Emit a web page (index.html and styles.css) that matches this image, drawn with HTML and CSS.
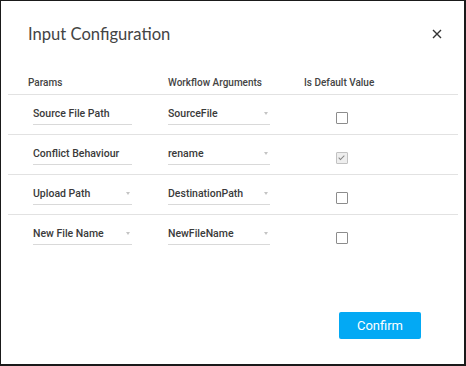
FILE: index.html
```html
<!DOCTYPE html>
<html lang="en">
  <head>
    <meta charset="UTF-8" />
    <meta name="viewport" content="width=device-width, initial-scale=1.0" />
    <title>Input Configuration</title>
    <link rel="stylesheet" href="styles.css">
  </head>
  <body>
    <main class="dialog">
      <header class="dialog-header">
        <h1>Input Configuration</h1>
        <button class="close" aria-label="Close">
          <svg width="10" height="10" viewBox="0 0 10 10">
            <path d="M1 1 L9 9 M9 1 L1 9" stroke="#333" stroke-width="1.4" />
          </svg>
        </button>
      </header>

      <section class="table">
        <div class="row head">
          <span>Params</span>
          <span>Workflow Arguments</span>
          <span>Is Default Value</span>
        </div>
        <div class="row">
          <div class="field param">Source File Path</div>
          <div class="field select">SourceFile</div>
          <div class="cell"><span class="check"></span></div>
        </div>
        <div class="row">
          <div class="field param">Conflict Behaviour</div>
          <div class="field select">rename</div>
          <div class="cell"><span class="check checked"></span></div>
        </div>
        <div class="row">
          <div class="field param select">Upload Path</div>
          <div class="field select">DestinationPath</div>
          <div class="cell"><span class="check"></span></div>
        </div>
        <div class="row">
          <div class="field param select">New File Name</div>
          <div class="field select">NewFileName</div>
          <div class="cell"><span class="check"></span></div>
        </div>
      </section>

      <footer class="dialog-footer">
        <button class="confirm">Confirm</button>
      </footer>
    </main>
  </body>
</html>
```

FILE: styles.css
```css
*,
*::before,
*::after {
  box-sizing: border-box;
}

body {
  margin: 0;
  font-family: Roboto, "Liberation Sans", sans-serif;
  background: #fff;
  color: #333;
}

.dialog {
  width: 466px;
  height: 366px;
  border: 1px solid #1a1a1a;
  border-right-width: 2px;
  border-bottom-width: 2px;
  background: #fff;
}

.dialog-header {
  display: flex;
  justify-content: space-between;
  align-items: center;
  padding: 21px 22px 0 27px;
  margin-bottom: 24px;
}

.dialog-header h1 {
  margin: 0;
  font-family: Lato, "Open Sans", sans-serif;
  font-weight: 400;
  font-size: 16.6px;
  line-height: 24px;
  color: #444;
}

.close {
  border: 0;
  background: none;
  padding: 0;
  width: 10px;
  height: 10px;
  display: flex;
}

.table {
  margin: 0 6px 0 7px;
}

.row {
  display: grid;
  grid-template-columns: 140px 136px 1fr;
  align-items: center;
  height: 40px;
  padding-left: 20px;
  border-bottom: 1px solid #e2e2e2;
}

.row:last-child {
  border-bottom: 0;
}

.row.head {
  height: 25px;
  font-size: 10px;
  font-weight: 500;
  color: #444;
}

.field {
  position: relative;
  width: 102px;
  font-size: 10.5px;
  font-weight: 500;
  line-height: 15px;
  padding-top: 1px;
  padding-bottom: 3px;
  border-bottom: 1px solid #d9d9d9;
  color: #3a3a3a;
}

.field.param {
  margin-left: 5px;
  width: 99px;
}

/* small grey dropdown caret */
.select::after {
  content: "";
  position: absolute;
  right: 2px;
  top: 7px;
  border-left: 2.5px solid transparent;
  border-right: 2.5px solid transparent;
  border-top: 3px solid #c4c4c4;
}

.cell {
  padding-left: 32px;
}

.check {
  display: block;
  width: 12px;
  height: 12px;
  margin-top: 6px;
  border: 1px solid #8c8c8c;
  border-radius: 1px;
}

.check.checked {
  background: #eee;
  border-color: #c2c2c2;
  position: relative;
}

.check.checked::after {
  content: "";
  position: absolute;
  left: 3px;
  top: 1px;
  width: 3px;
  height: 6px;
  border-right: 1.5px solid #888;
  border-bottom: 1.5px solid #888;
  transform: rotate(45deg);
}

.dialog-footer {
  display: flex;
  justify-content: flex-end;
  padding: 57px 43px 0 0;
}

.confirm {
  width: 82px;
  height: 27px;
  border: 0;
  border-radius: 2px;
  background: #03a9f4;
  color: #fff;
  font-family: Roboto, "Liberation Sans", sans-serif;
  font-size: 13px;
}
```
